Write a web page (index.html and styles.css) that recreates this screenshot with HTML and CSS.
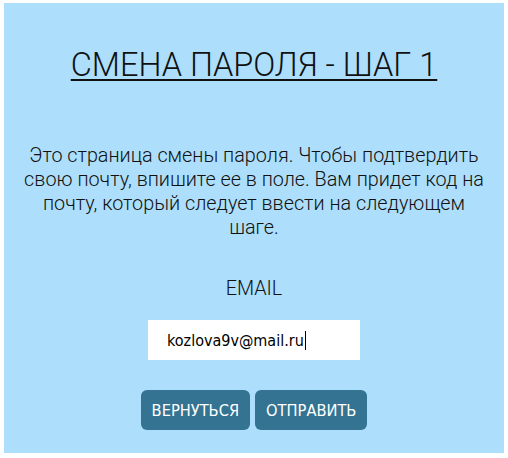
FILE: index.html
```html
<!DOCTYPE html>
<html lang="ru">
<head>
<meta charset="utf-8">
<title>Смена пароля</title>
<link rel="stylesheet" href="styles.css">
</head>
<body>
<div class="panel">
  <h1 class="title">СМЕНА ПАРОЛЯ - ШАГ 1</h1>
  <p class="desc">Это страница смены пароля. Чтобы подтвердить свою почту, впишите ее в поле. Вам придет код на почту, который следует ввести на следующем шаге.</p>
  <div class="label">EMAIL</div>
  <div class="field"><span class="value">kozlova9v@mail.ru</span><span class="caret"></span></div>
  <div class="actions">
    <button class="btn">ВЕРНУТЬСЯ</button>
    <button class="btn">ОТПРАВИТЬ</button>
  </div>
</div>
</body>
</html>
```
FILE: styles.css
```css
html, body {
  margin: 0;
  padding: 0;
  background: #ffffff;
}
.panel {
  box-sizing: border-box;
  width: 500px;
  height: 450px;
  margin: 3px 0 0 4px;
  background: #addffc;
  padding: 37px 15px 0;
  text-align: center;
  font-family: Roboto, "Noto Sans", sans-serif;
  font-weight: 300;
  color: #111;
}
.title {
  margin: 0;
  font-size: 32.5px;
  font-weight: 300;
  line-height: 50px;
  text-decoration: underline;
  text-decoration-thickness: 2px;
  text-underline-offset: 3px;
}
.desc {
  margin: 54px 0 0;
  font-size: 19.8px;
  line-height: 24px;
}
.label {
  margin-top: 37px;
  font-size: 19.8px;
  line-height: 24px;
}
.field {
  box-sizing: border-box;
  width: 212px;
  height: 40px;
  margin: 19px auto 0;
  background: #fff;
  display: flex;
  align-items: center;
  padding-left: 19px;
  font-family: "DejaVu Sans Condensed", "DejaVu Sans", sans-serif;
  font-weight: 400;
  font-size: 16px;
  color: #000;
  text-align: left;
}
.caret {
  display: inline-block;
  width: 1px;
  height: 19px;
  background: #000;
  margin-left: 1px;
}
.actions {
  margin-top: 30px;
  display: flex;
  justify-content: center;
  gap: 5px;
}
.btn {
  height: 40px;
  padding: 0 11px;
  border: none;
  border-radius: 6px;
  background: #347392;
  color: #fff;
  font-family: "DejaVu Sans Condensed", "DejaVu Sans", sans-serif;
  font-size: 16.3px;
  cursor: pointer;
}
```
